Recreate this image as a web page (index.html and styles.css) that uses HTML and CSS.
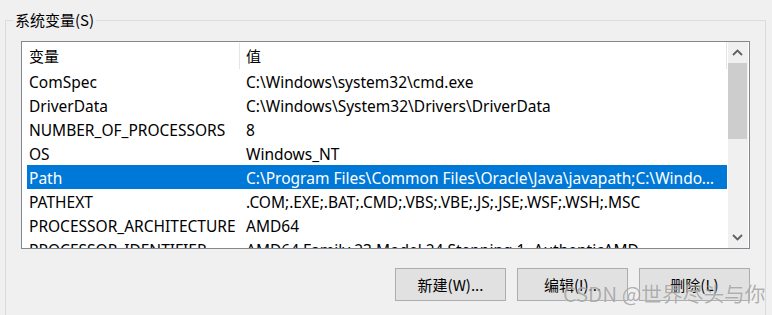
FILE: index.html
```html
<!DOCTYPE html>
<html lang="zh-CN">
<head>
<meta charset="utf-8">
<title>系统变量</title>
<link rel="stylesheet" href="styles.css">
</head>
<body>
<fieldset class="group">
  <legend class="group-title">系统变量(S)</legend>
  <div class="list">
    <div class="list-view">
      <div class="list-header">
        <div class="hcell hname">变量</div>
        <div class="hcell hvalue">值</div>
      </div>
      <div class="list-body">
        <div class="row"><div class="cell name">ComSpec</div><div class="cell value">C:\Windows\system32\cmd.exe</div></div>
        <div class="row"><div class="cell name">DriverData</div><div class="cell value">C:\Windows\System32\Drivers\DriverData</div></div>
        <div class="row"><div class="cell name">NUMBER_OF_PROCESSORS</div><div class="cell value">8</div></div>
        <div class="row"><div class="cell name">OS</div><div class="cell value">Windows_NT</div></div>
        <div class="row selected"><div class="cell name">Path</div><div class="cell value">C:\Program Files\Common Files\Oracle\Java\javapath;C:\Windows\system32;C:\Windows;C:\Windows\System32\Wbem</div></div>
        <div class="row"><div class="cell name">PATHEXT</div><div class="cell value">.COM;.EXE;.BAT;.CMD;.VBS;.VBE;.JS;.JSE;.WSF;.WSH;.MSC</div></div>
        <div class="row"><div class="cell name">PROCESSOR_ARCHITECTURE</div><div class="cell value">AMD64</div></div>
        <div class="row"><div class="cell name">PROCESSOR_IDENTIFIER</div><div class="cell value">AMD64 Family 23 Model 24 Stepping 1, AuthenticAMD</div></div>
      </div>
    </div>
    <div class="scrollbar">
      <div class="sb-btn">
        <svg width="11" height="7" viewBox="0 0 11 7"><path d="M1 6 L5.5 1.5 L10 6" fill="none" stroke="#606060" stroke-width="1.8"/></svg>
      </div>
      <div class="sb-track">
        <div class="sb-thumb"></div>
      </div>
      <div class="sb-btn">
        <svg width="11" height="7" viewBox="0 0 11 7"><path d="M1 1 L5.5 5.5 L10 1" fill="none" stroke="#606060" stroke-width="1.8"/></svg>
      </div>
    </div>
  </div>
  <div class="buttons">
    <button class="btn">新建(W)...</button>
    <button class="btn">编辑(I)...</button>
    <button class="btn">删除(L)</button>
  </div>
</fieldset>
<div class="watermark">CSDN @世界尽头与你</div>
</body>
</html>
```

FILE: styles.css
```css
html, body {
  margin: 0;
  padding: 0;
  background: #f0f0f0;
  width: 772px;
  height: 315px;
  overflow: hidden;
  font-family: "Noto Sans", "Noto Sans CJK SC", sans-serif;
  font-size: 15.5px;
  color: #000;
}

.group {
  margin: 10px 0 0 5px;
  width: 761px;
  box-sizing: border-box;
  height: 320px;
  border: 1px solid #dcdcdc;
  padding: 11px 15px 0 15px;
}

.group-title {
  margin-left: -8px;
  padding: 0 2px;
  line-height: 20px;
  font-family: "Noto Sans CJK SC", sans-serif;
  font-size: 15px;
}

.list {
  display: flex;
  width: 729px;
  height: 208px;
  box-sizing: border-box;
  border: 1px solid #828790;
  background: #fff;
  overflow: hidden;
}

.list-view {
  width: 706px;
  overflow: hidden;
}

.list-header {
  display: flex;
  width: 705px;
  height: 27px;
  border-right: 1px solid #e5e5e5;
  box-sizing: border-box;
}

.hcell {
  line-height: 25px;
  font-family: "Noto Sans CJK SC", sans-serif;
  font-size: 15px;
  white-space: nowrap;
}

.hname {
  width: 218px;
  box-sizing: border-box;
  padding-left: 7px;
  border-right: 1px solid #e5e5e5;
  margin-top: 1px;
}

.hvalue {
  padding-left: 6px;
  margin-top: 1px;
}

.row {
  display: flex;
  height: 24px;
  margin-left: 5px;
  width: 700px;
  box-sizing: border-box;
  padding-top: 2px;
  line-height: 22px;
  white-space: nowrap;
}

.row.selected {
  background: #0078d7;
  color: #fff;
}

.cell {
  overflow: hidden;
  white-space: nowrap;
}

.name {
  width: 212px;
  flex: none;
  padding-left: 2px;
  box-sizing: border-box;
}

.value {
  flex: 1;
  min-width: 0;
  padding-left: 7px;
  padding-right: 12px;
  text-overflow: ellipsis;
}

.scrollbar {
  width: 20px;
  display: flex;
  flex-direction: column;
  background: #f0f0f0;
}

.sb-btn {
  height: 21px;
  display: flex;
  align-items: center;
  justify-content: center;
  padding-right: 1px;
}

.sb-track {
  flex: 1;
}

.sb-thumb {
  height: 76px;
  margin-right: 1px;
  background: #cdcdcd;
}

.buttons {
  display: flex;
  justify-content: flex-end;
  gap: 11px;
  width: 729px;
  margin-top: 19px;
}

.btn {
  width: 111px;
  height: 33px;
  background: #e1e1e1;
  border: 1px solid #adadad;
  border-radius: 0;
  font-family: "Noto Sans CJK SC", sans-serif;
  font-size: 15px;
  color: #000;
  padding: 0;
}

.watermark {
  position: absolute;
  left: 563px;
  top: 281px;
  font-family: "Noto Sans CJK SC", sans-serif;
  font-size: 20.7px;
  line-height: 24px;
  color: rgba(110, 110, 110, 0.55);
  text-shadow: 0 0 1px rgba(255, 255, 255, 0.8);
  white-space: nowrap;
}
```
